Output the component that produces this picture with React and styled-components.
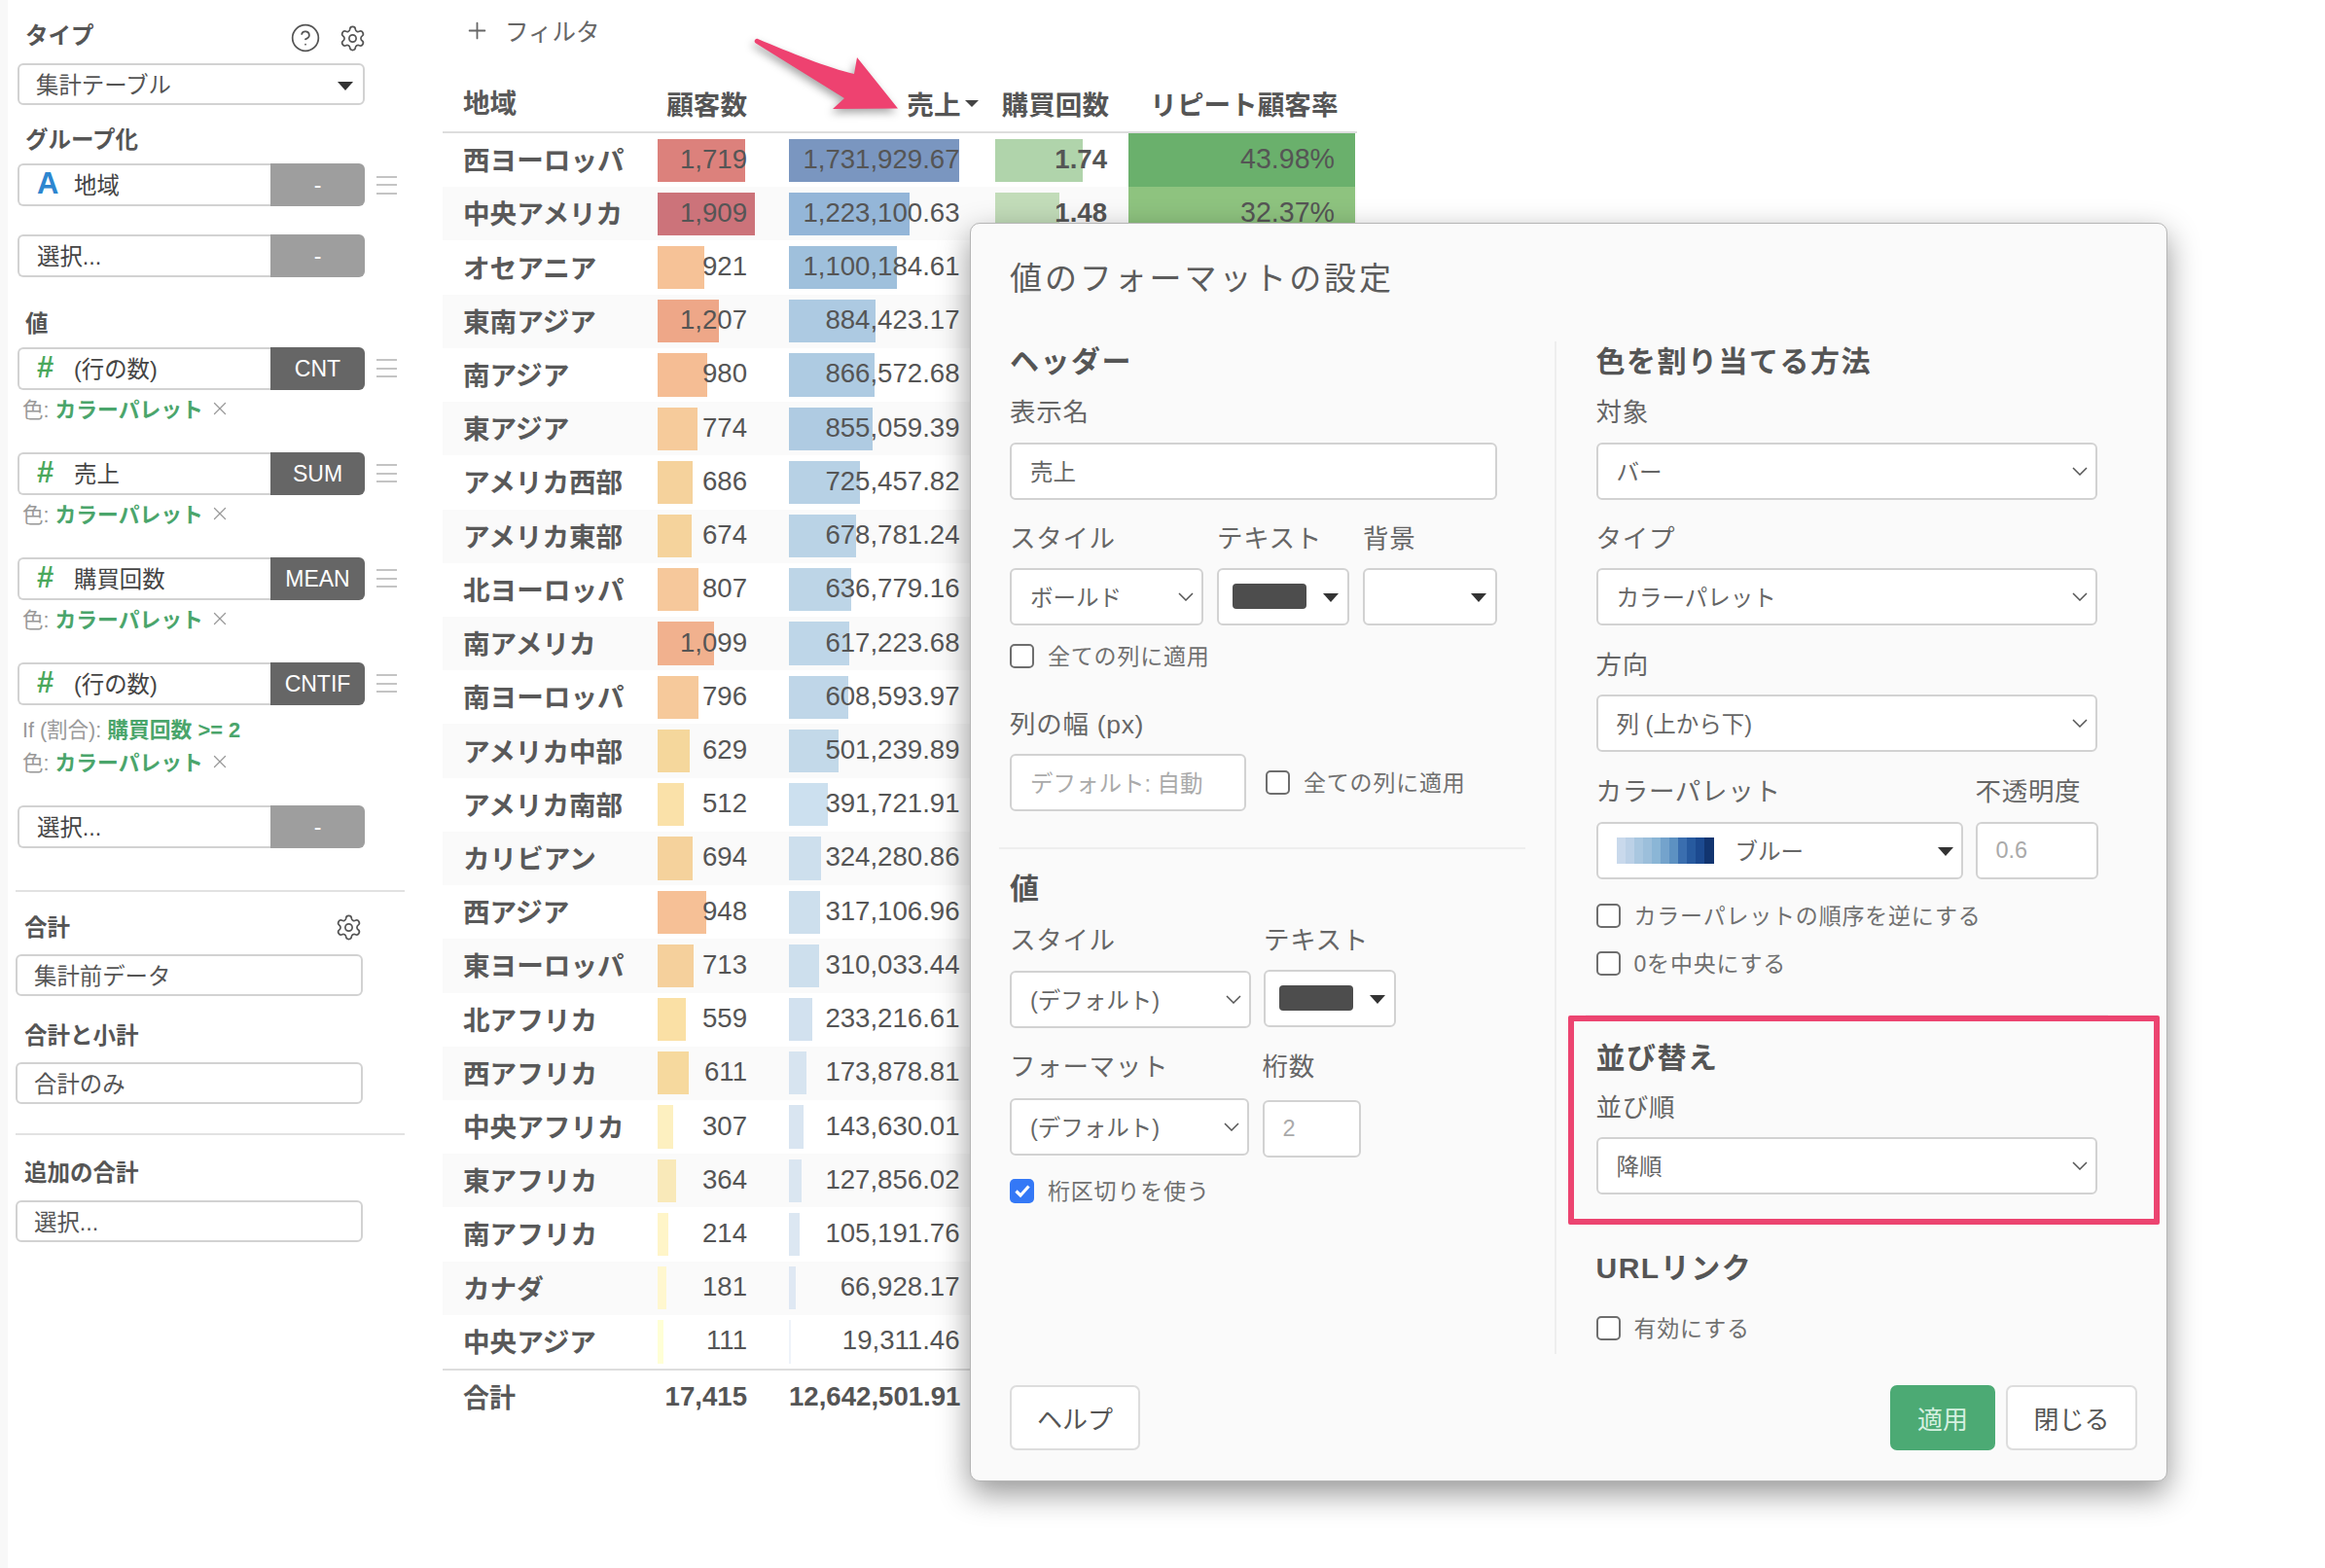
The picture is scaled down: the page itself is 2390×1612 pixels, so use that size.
import styled, { createGlobalStyle } from 'styled-components';
import { Settings, CircleHelp, Plus, X } from 'lucide-react';

const FONT = '"Liberation Sans", "Noto Sans CJK JP", sans-serif';

const GlobalStyle = createGlobalStyle`
  html, body {
    margin: 0;
    padding: 0;
    background: #fff;
  }
  body {
    width: 2390px;
    height: 1612px;
    overflow: hidden;
    color: #555;
    font-family: ${FONT};
  }
  * {
    box-sizing: border-box;
  }
`;

const rows = [
  { name: '西ヨーロッパ', count: 1719, sales: 1731929.67, buy: 1.74, repeat: '43.98%', buyColor: '#b0d4ab', repeatColor: '#6ab06c' },
  { name: '中央アメリカ', count: 1909, sales: 1223100.63, buy: 1.48, repeat: '32.37%', buyColor: '#c2dcb9', repeatColor: '#8ec37f' },
  { name: 'オセアニア', count: 921, sales: 1100184.61 },
  { name: '東南アジア', count: 1207, sales: 884423.17 },
  { name: '南アジア', count: 980, sales: 866572.68 },
  { name: '東アジア', count: 774, sales: 855059.39 },
  { name: 'アメリカ西部', count: 686, sales: 725457.82 },
  { name: 'アメリカ東部', count: 674, sales: 678781.24 },
  { name: '北ヨーロッパ', count: 807, sales: 636779.16 },
  { name: '南アメリカ', count: 1099, sales: 617223.68 },
  { name: '南ヨーロッパ', count: 796, sales: 608593.97 },
  { name: 'アメリカ中部', count: 629, sales: 501239.89 },
  { name: 'アメリカ南部', count: 512, sales: 391721.91 },
  { name: 'カリビアン', count: 694, sales: 324280.86 },
  { name: '西アジア', count: 948, sales: 317106.96 },
  { name: '東ヨーロッパ', count: 713, sales: 310033.44 },
  { name: '北アフリカ', count: 559, sales: 233216.61 },
  { name: '西アフリカ', count: 611, sales: 173878.81 },
  { name: '中央アフリカ', count: 307, sales: 143630.01 },
  { name: '東アフリカ', count: 364, sales: 127856.02 },
  { name: '南アフリカ', count: 214, sales: 105191.76 },
  { name: 'カナダ', count: 181, sales: 66928.17 },
  { name: '中央アジア', count: 111, sales: 19311.46 },
];

const countStops = [
  [111, '#ffffd6'], [181, '#fff7cf'], [214, '#fff5c8'], [307, '#fdf0c0'], [364, '#f9e9b9'],
  [512, '#fae1a9'], [559, '#fae0a5'], [629, '#f5d79c'], [713, '#f5d09c'], [796, '#f6c99b'],
  [948, '#f6c096'], [1207, '#eea788'], [1719, '#dc817c'], [1909, '#cc737a'],
];

const salesStops = [
  [19311, '#eef3f9'], [66928, '#dfe8f3'], [143630, '#d9e5f1'], [233216, '#d2e1ef'],
  [317106, '#cddfed'], [391721, '#cce0ef'], [501239, '#c3d9e9'], [608593, '#bfd6e8'],
  [866572, '#aecbe2'], [1100184, '#9fc0dc'], [1223100, '#94b6d8'], [1731929, '#7a96c0'],
];

function scaleColor(stops, value) {
  const hex = (c) => [1, 3, 5].map((i) => parseInt(c.slice(i, i + 2), 16));
  let i = 0;
  while (i < stops.length - 2 && value > stops[i + 1][0]) i += 1;
  const [v0, c0] = stops[i];
  const [v1, c1] = stops[i + 1];
  const t = Math.min(1, Math.max(0, (value - v0) / (v1 - v0)));
  const a = hex(c0);
  const b = hex(c1);
  return `rgb(${a.map((x, k) => Math.round(x + (b[k] - x) * t)).join(',')})`;
}

const money = (v) => v.toLocaleString('en-US', { minimumFractionDigits: 2, maximumFractionDigits: 2 });

export default function App() {
  return (
    <Page>
      <GlobalStyle />
      <Sidebar>
        <UpperGroup>
          <HeadRow>
            <PanelLabel>タイプ</PanelLabel>
            <HeadIcons>
              <CircleHelp size={32} strokeWidth={1.3} color="#555" />
              <Settings size={29} strokeWidth={1.4} color="#555" />
            </HeadIcons>
          </HeadRow>
          <SideSelect $mt={13}>
            集計テーブル
            <Caret />
          </SideSelect>

          <PanelLabel $mt={21}>グループ化</PanelLabel>
          <ColumnRow $mt={9} icon="A" iconColor="#2d86d0" label="地域" tag="-" muted drag />
          <ColumnRow $mt={29} label="選択..." tag="-" muted />

          <PanelLabel $mt={32.5}>値</PanelLabel>
          <ColumnRow $mt={9} icon="#" label="(行の数)" tag="CNT" drag />
          <ColorMeta />
          <ColumnRow $mt={33} icon="#" label="売上" tag="SUM" drag />
          <ColorMeta />
          <ColumnRow $mt={33} icon="#" label="購買回数" tag="MEAN" drag />
          <ColorMeta />
          <ColumnRow $mt={33} icon="#" label="(行の数)" tag="CNTIF" drag />
          <Meta $mt={12}>
            If (割合): <MetaValue>購買回数 &gt;= 2</MetaValue>
          </Meta>
          <ColorMeta $mt={10} />
          <ColumnRow $mt={33} label="選択..." tag="-" muted />
        </UpperGroup>

        <SideDivider $mt={43} />
        <LowerHead>
          <PanelLabel>合計</PanelLabel>
          <Settings size={29} strokeWidth={1.4} color="#555" />
        </LowerHead>
        <SideSelect $mt={14}>集計前データ</SideSelect>
        <PanelLabel $mt={26} $ml={1}>
          合計と小計
        </PanelLabel>
        <SideSelect $mt={12}>合計のみ</SideSelect>
        <SideDivider $mt={30} />
        <PanelLabel $mt={24} $ml={1}>
          追加の合計
        </PanelLabel>
        <SideSelect $mt={13}>選択...</SideSelect>
      </Sidebar>

      <Main>
        <FilterBar>
          <Plus size={27} strokeWidth={1.6} color="#666" />
          フィルタ
        </FilterBar>
        <Table>
          <HeadLine>
            <NameCell>地域</NameCell>
            <HeadCell $w={92}>顧客数</HeadCell>
            <HeadCell $w={175.5} $ml={44}>
              売上
              <SortCaret />
            </HeadCell>
            <HeadCell $w={115} $ml={37.5}>
              購買回数
            </HeadCell>
            <HeadCell $w={233} $ml={21} $pr={18.5}>
              リピート顧客率
            </HeadCell>
          </HeadLine>
          {rows.map((row) => (
            <Row key={row.name}>
              <NameCell>{row.name}</NameCell>
              <ValueCell $w={92}>
                <Bar style={{ width: (row.count / 1909) * 100, background: scaleColor(countStops, row.count) }} />
                <ValueText>{row.count.toLocaleString('en-US')}</ValueText>
              </ValueCell>
              <ValueCell $w={175.5} $ml={43}>
                <Bar style={{ width: (row.sales / 1731929.67) * 175, background: scaleColor(salesStops, row.sales) }} />
                <ValueText>{money(row.sales)}</ValueText>
              </ValueCell>
              {row.buy && (
                <ValueCell $w={115} $ml={36.5}>
                  <Bar style={{ width: ((row.buy - 0.76) / 0.98) * 90, background: row.buyColor }} />
                  <ValueText $bold>{row.buy.toFixed(2)}</ValueText>
                </ValueCell>
              )}
              {row.repeat && (
                <RepeatCell style={{ background: row.repeatColor }}>
                  <ValueText $large>{row.repeat}</ValueText>
                </RepeatCell>
              )}
            </Row>
          ))}
          <TotalLine>
            <TotalName>合計</TotalName>
            <ValueCell $w={92}>
              <ValueText $bold>17,415</ValueText>
            </ValueCell>
            <ValueCell $w={175.5} $ml={43}>
              <ValueText $bold>12,642,501.91</ValueText>
            </ValueCell>
          </TotalLine>
        </Table>
      </Main>

      <Arrow viewBox="0 0 170 90" width="170" height="90">
        <path
          d="M4.5 2.5 C3 4 3.5 5.5 5 6.5 L96 63 L84 74 L151 73.5 L109 21 L106 38 C80 32 40 16 7 2 C6 1.6 5 2 4.5 2.5 Z"
          fill="#ee4270"
        />
      </Arrow>

      <Modal>
        <ModalHeader>
          <ModalTitle>値のフォーマットの設定</ModalTitle>
        </ModalHeader>
        <ModalBody>
          <LeftPane>
            <SectionTitle>ヘッダー</SectionTitle>
            <FieldLabel $mt={17}>表示名</FieldLabel>
            <TextBox $mt={15}>売上</TextBox>
            <Inline $mt={24} $gap={14}>
              <Field $w={199}>
                <FieldLabel>スタイル</FieldLabel>
                <SelectBox $mt={14}>ボールド</SelectBox>
              </Field>
              <Field $w={136}>
                <FieldLabel>テキスト</FieldLabel>
                <ColorBox $mt={14} chip />
              </Field>
              <Field $w={138}>
                <FieldLabel>背景</FieldLabel>
                <ColorBox $mt={14} />
              </Field>
            </Inline>
            <CheckRow $mt={19}>全ての列に適用</CheckRow>
            <FieldLabel $mt={42}>列の幅 (px)</FieldLabel>
            <Inline $mt={14} $gap={20} $center>
              <TextBox $w={243} $placeholder>
                デフォルト: 自動
              </TextBox>
              <CheckRow>全ての列に適用</CheckRow>
            </Inline>
            <PaneDivider $mt={37} />
            <SectionTitle $mt={20}>値</SectionTitle>
            <Inline $mt={18} $gap={13}>
              <Field $w={248}>
                <FieldLabel>スタイル</FieldLabel>
                <SelectBox $mt={15}>(デフォルト)</SelectBox>
              </Field>
              <Field $w={136}>
                <FieldLabel>テキスト</FieldLabel>
                <ColorBox $mt={14} chip />
              </Field>
            </Inline>
            <Inline $mt={24} $gap={13.5}>
              <Field $w={246}>
                <FieldLabel>フォーマット</FieldLabel>
                <SelectBox $mt={16}>(デフォルト)</SelectBox>
              </Field>
              <Field $w={101}>
                <FieldLabel>桁数</FieldLabel>
                <TextBox $mt={18} $placeholder>
                  2
                </TextBox>
              </Field>
            </Inline>
            <CheckRow $mt={22} checked>
              桁区切りを使う
            </CheckRow>
          </LeftPane>

          <RightPane>
            <SectionTitle>色を割り当てる方法</SectionTitle>
            <FieldLabel $mt={17}>対象</FieldLabel>
            <SelectBox $mt={15}>バー</SelectBox>
            <FieldLabel $mt={24}>タイプ</FieldLabel>
            <SelectBox $mt={14}>カラーパレット</SelectBox>
            <FieldLabel $mt={25}>方向</FieldLabel>
            <SelectBox $mt={14}>列 (上から下)</SelectBox>
            <Inline $mt={25} $gap={13}>
              <Field $w={377}>
                <FieldLabel>カラーパレット</FieldLabel>
                <PaletteBox $mt={15}>
                  <Swatch>
                    {['#c9d9ec', '#bcd1e7', '#a9c7e0', '#9cbfdb', '#8bb6d6', '#74a3cc', '#5d91c2', '#3a6eaf', '#275a9f', '#1c4a90', '#123570'].map((c) => (
                      <SwatchStep key={c} $c={c} />
                    ))}
                  </Swatch>
                  ブルー
                  <Caret $right={8} />
                </PaletteBox>
              </Field>
              <Field $w={126}>
                <FieldLabel>不透明度</FieldLabel>
                <TextBox $mt={15} $placeholder>
                  0.6
                </TextBox>
              </Field>
            </Inline>
            <CheckRow $mt={25}>カラーパレットの順序を逆にする</CheckRow>
            <CheckRow $mt={24}>0を中央にする</CheckRow>
            <RightDivider $mt={40} />
            <SectionTitle $mt={22}>並び替え</SectionTitle>
            <FieldLabel $mt={16}>並び順</FieldLabel>
            <SelectBox $mt={14}>降順</SelectBox>
            <SectionTitle $mt={55}>URLリンク</SectionTitle>
            <CheckRow $mt={30}>有効にする</CheckRow>
          </RightPane>
        </ModalBody>
        <ModalFooter>
          <FooterButton $w={134}>ヘルプ</FooterButton>
          <FooterActions>
            <FooterButton $w={108} $primary>
              適用
            </FooterButton>
            <FooterButton $w={135}>閉じる</FooterButton>
          </FooterActions>
        </ModalFooter>
        <Highlight />
      </Modal>
    </Page>
  );
}

function ColumnRow({ $mt, icon, iconColor = '#4aa85c', label, tag, muted, drag }) {
  return (
    <ColumnWrap $mt={$mt}>
      <ColumnName>
        {icon && <TypeIcon $color={iconColor}>{icon}</TypeIcon>}
        {label}
      </ColumnName>
      <ColumnTag $muted={muted}>{tag}</ColumnTag>
      {drag && (
        <DragHandle>
          <i />
          <i />
          <i />
        </DragHandle>
      )}
    </ColumnWrap>
  );
}

function ColorMeta({ $mt = 7 }) {
  return (
    <Meta $mt={$mt}>
      色: <MetaValue>カラーパレット</MetaValue>
      <X size={22} strokeWidth={1.4} color="#999" />
    </Meta>
  );
}

function SelectBox({ $mt, children }) {
  return (
    <Box $mt={$mt}>
      {children}
      <Chevron viewBox="0 0 16 9" width="16" height="9">
        <path d="M1 1 L8 8 L15 1" fill="none" stroke="#555" strokeWidth="1.5" />
      </Chevron>
    </Box>
  );
}

function ColorBox({ $mt, chip }) {
  return (
    <Box $mt={$mt}>
      {chip && <ColorChip />}
      <Caret $right={9} />
    </Box>
  );
}

function CheckRow({ $mt, checked, children }) {
  return (
    <CheckLine $mt={$mt}>
      <CheckBox $checked={checked}>
        {checked && (
          <svg viewBox="0 0 20 20" width="20" height="20">
            <path d="M3.5 10.5 L8 15 L16.5 5.5" fill="none" stroke="#fff" strokeWidth="3.2" />
          </svg>
        )}
      </CheckBox>
      <CheckText>{children}</CheckText>
    </CheckLine>
  );
}

/* Page */
const Page = styled.div`
  position: relative;
  display: flex;
  width: 2390px;
  height: 1612px;
  background: #fff;
  border-left: 8px solid #f8f8f8;
`;

/* Sidebar */
const Sidebar = styled.aside`
  flex: 0 0 447px;
  padding: 22px 0 0 8px;
`;

const UpperGroup = styled.div`
  padding-left: 2px;
`;

const HeadRow = styled.div`
  display: flex;
  justify-content: space-between;
  align-items: center;
  width: 358px;
  height: 30px;
  padding-left: 8px;
`;

const HeadIcons = styled.div`
  display: flex;
  align-items: center;
  gap: 18px;
  margin-top: 4px;
  margin-right: -1px;
`;

const PanelLabel = styled.div`
  margin-top: ${({ $mt }) => $mt || 0}px;
  margin-left: ${({ $ml }) => $ml || 0}px;
  padding-left: ${({ $mt }) => ($mt ? 8 : 0)}px;
  color: #555;
  font-weight: 700;
  font-size: 23.5px;
  line-height: 30px;
`;

const SideSelect = styled.div`
  position: relative;
  display: flex;
  align-items: center;
  width: 357px;
  height: 43px;
  margin-top: ${({ $mt }) => $mt || 0}px;
  padding: 0 0 2px 17px;
  color: #555;
  font-size: 23.4px;
  background: #fff;
  border: 2px solid #d2d2d2;
  border-radius: 6px;
`;

const Caret = styled.span`
  position: absolute;
  top: 50%;
  right: ${({ $right }) => $right ?? 10}px;
  margin-top: -3px;
  border-top: 9px solid #333;
  border-right: 8px solid transparent;
  border-left: 8px solid transparent;
`;

const ColumnWrap = styled.div`
  display: flex;
  align-items: center;
  height: 44px;
  margin-top: ${({ $mt }) => $mt || 0}px;
`;

const ColumnName = styled.div`
  display: flex;
  align-items: center;
  width: 260px;
  height: 100%;
  padding: 0 0 2px 18px;
  color: #444;
  font-size: 23.4px;
  background: #fff;
  border: 2px solid #d2d2d2;
  border-right: none;
  border-radius: 6px 0 0 6px;
`;

const TypeIcon = styled.span`
  width: 38px;
  color: ${({ $color }) => $color};
  font-weight: 700;
  font-size: 31px;
`;

const ColumnTag = styled.div`
  display: flex;
  justify-content: center;
  align-items: center;
  width: 97px;
  height: 100%;
  padding-top: 1px;
  color: #fff;
  font-size: 23px;
  background: ${({ $muted }) => ($muted ? '#9e9e9e' : '#666')};
  border-radius: 0 6px 6px 0;
`;

const DragHandle = styled.div`
  display: flex;
  flex-direction: column;
  gap: 6.5px;
  width: 21px;
  margin-left: 12px;

  i {
    display: block;
    height: 2px;
    background: #c4c4c4;
  }
`;

const Meta = styled.div`
  display: flex;
  align-items: center;
  gap: 6px;
  height: 24px;
  margin-top: ${({ $mt }) => $mt || 0}px;
  padding-left: 5px;
  color: #999;
  font-size: 21.5px;
`;

const MetaValue = styled.span`
  color: #4aa56b;
  font-weight: 700;
  font-size: 21.8px;
`;

const SideDivider = styled.div`
  width: 400px;
  height: 2px;
  margin-top: ${({ $mt }) => $mt}px;
  background: #e2e2e2;
`;

const LowerHead = styled.div`
  display: flex;
  justify-content: space-between;
  align-items: center;
  width: 357px;
  height: 30px;
  margin-top: 20.5px;
  padding: 3px 0 0 9px;
`;

/* Table */
const Main = styled.main`
  flex: 0 0 940px;
`;

const FilterBar = styled.div`
  display: flex;
  align-items: center;
  gap: 15px;
  height: 64px;
  padding: 0 0 2px 22px;
  color: #666;
  font-size: 24.5px;
`;

const Table = styled.div`
  width: 940px;
`;

const HeadLine = styled.div`
  display: flex;
  align-items: center;
  height: 73px;
  padding-top: 12px;
  font-weight: 700;
  font-size: 27.6px;
  border-bottom: 2px solid #ddd;
`;

const NameCell = styled.div`
  display: flex;
  flex: 0 0 221px;
  align-items: center;
  padding: 0 0 3px 21px;
  color: #595959;
  font-weight: 700;
  font-size: 27.6px;
`;

const HeadCell = styled.div`
  position: relative;
  flex: 0 0 ${({ $w }) => $w}px;
  margin-left: ${({ $ml }) => $ml || 0}px;
  padding-right: ${({ $pr }) => $pr || 0}px;
  text-align: right;
  white-space: nowrap;
`;

const SortCaret = styled.span`
  position: absolute;
  top: 50%;
  left: 100%;
  margin-top: -3px;
  margin-left: 4px;
  border-top: 7px solid #444;
  border-right: 7px solid transparent;
  border-left: 7px solid transparent;
`;

const Row = styled.div`
  display: flex;
  align-items: stretch;
  height: 55.22px;

  &:nth-child(odd) {
    background: #fafafa;
  }
`;

const ValueCell = styled.div`
  position: relative;
  display: flex;
  flex: 0 0 ${({ $w }) => $w}px;
  justify-content: flex-end;
  align-items: center;
  margin-left: ${({ $ml }) => $ml || 0}px;
`;

const Bar = styled.span`
  position: absolute;
  top: 5.5px;
  bottom: 5.5px;
  left: 0;
`;

const ValueText = styled.span`
  position: relative;
  margin-bottom: 2px;
  color: #555;
  font-weight: ${({ $bold }) => ($bold ? 700 : 400)};
  font-size: ${({ $large }) => ($large ? 28.6 : 27.6)}px;
  white-space: nowrap;
`;

const RepeatCell = styled.div`
  display: flex;
  flex: 0 0 233px;
  justify-content: flex-end;
  align-items: center;
  margin-left: 22px;
  padding-right: 21px;
`;

const TotalLine = styled.div`
  display: flex;
  align-items: center;
  height: 60px;
  padding-bottom: 2px;
  border-top: 2px solid #ddd;
`;

const TotalName = styled(NameCell)`
  font-size: 27px;
`;

const Arrow = styled.svg`
  position: absolute;
  top: 38px;
  left: 764px;
  filter: drop-shadow(-2px 4px 4px rgba(0, 0, 0, 0.35));
`;

/* Modal */
const Modal = styled.section`
  position: absolute;
  top: 228.5px;
  left: 989px;
  display: flex;
  flex-direction: column;
  width: 1231px;
  height: 1294px;
  background: #fafafa;
  border: 1px solid #b5b5b5;
  border-radius: 10px;
  box-shadow: 0 12px 32px rgba(0, 0, 0, 0.42);
`;

const ModalHeader = styled.header`
  display: flex;
  align-items: flex-start;
  height: 121px;
  padding: 34px 0 0 40px;
`;

const ModalTitle = styled.h2`
  margin: 0;
  color: #5c5c5c;
  font-weight: 400;
  font-size: 33px;
  line-height: 46px;
  letter-spacing: 2.9px;
`;

const ModalBody = styled.div`
  display: flex;
  height: 1041px;
`;

const LeftPane = styled.div`
  flex: 0 0 600px;
  min-width: 0;
  padding: 0 59px 0 40px;
`;

const RightPane = styled.div`
  flex: 1;
  min-width: 0;
  padding: 0 71px 0 40.5px;
  border-left: 2px solid #eee;
`;

const SectionTitle = styled.h3`
  height: 40px;
  margin: ${({ $mt }) => $mt || 0}px 0 0;
  padding-top: 1px;
  color: #555;
  font-weight: 700;
  font-size: 30px;
  line-height: 40px;
  letter-spacing: 1.5px;
`;

const FieldLabel = styled.div`
  height: 32px;
  margin-top: ${({ $mt }) => $mt || 0}px;
  padding-top: 0.5px;
  color: #666;
  font-size: 26.5px;
  line-height: 32px;
  letter-spacing: 0.7px;
  white-space: nowrap;
`;

const Box = styled.div`
  position: relative;
  display: flex;
  align-items: center;
  height: 59px;
  margin-top: ${({ $mt }) => $mt || 0}px;
  padding-left: 19px;
  color: #666;
  font-size: 23.5px;
  background: #fff;
  border: 2px solid #d2d2d2;
  border-radius: 6px;
`;

const TextBox = styled(Box)`
  flex: ${({ $w }) => ($w ? `0 0 ${$w}px` : 'none')};
  color: ${({ $placeholder }) => ($placeholder ? '#aaa' : '#666')};
`;

const PaletteBox = styled(Box)`
  gap: 22px;
`;

const Swatch = styled.span`
  display: flex;
  width: 100px;
  height: 27px;
`;

const SwatchStep = styled.i`
  flex: 1;
  background: ${({ $c }) => $c};
`;

const Chevron = styled.svg`
  position: absolute;
  top: 50%;
  right: 8px;
  margin-top: -4px;
`;

const ColorChip = styled.span`
  width: 76px;
  height: 26px;
  margin-left: -5.5px;
  background: #4d4d4d;
  border-radius: 4px;
`;

const Inline = styled.div`
  display: flex;
  align-items: ${({ $center }) => ($center ? 'center' : 'flex-start')};
  gap: ${({ $gap }) => $gap}px;
  margin-top: ${({ $mt }) => $mt || 0}px;
`;

const Field = styled.div`
  flex: 0 0 ${({ $w }) => $w}px;
`;

const CheckLine = styled.label`
  display: flex;
  align-items: center;
  gap: 14px;
  height: 25px;
  margin-top: ${({ $mt }) => $mt || 0}px;
  color: #707070;
  font-size: 23px;
  letter-spacing: 0.8px;
  white-space: nowrap;
`;

const CheckText = styled.span`
  margin-bottom: 3px;
`;

const CheckBox = styled.span`
  display: flex;
  flex: 0 0 25px;
  justify-content: center;
  align-items: center;
  height: 25px;
  background: ${({ $checked }) => ($checked ? '#3478f6' : '#fff')};
  border: ${({ $checked }) => ($checked ? 'none' : '2px solid #6e6e6e')};
  border-radius: 5px;
`;

const PaneDivider = styled.div`
  width: 541px;
  height: 2px;
  margin-top: ${({ $mt }) => $mt}px;
  margin-left: -11px;
  background: #eee;
`;

const RightDivider = styled(PaneDivider)`
  width: 537px;
`;

const ModalFooter = styled.footer`
  display: flex;
  justify-content: space-between;
  align-items: flex-start;
  padding: 32px 30px 0 40px;
`;

const FooterActions = styled.div`
  display: flex;
  gap: 11px;
`;

const FooterButton = styled.button`
  width: ${({ $w }) => $w}px;
  height: 67px;
  color: ${({ $primary }) => ($primary ? '#d5f0e0' : '#555')};
  font-size: 26px;
  font-family: inherit;
  background: ${({ $primary }) => ($primary ? '#4caa74' : '#fff')};
  border: ${({ $primary }) => ($primary ? 'none' : '2px solid #ddd')};
  border-radius: 7px;
`;

const Highlight = styled.div`
  position: absolute;
  top: 814px;
  left: 614px;
  width: 608px;
  height: 215px;
  border: 6px solid #ec4470;
  border-radius: 2px;
  pointer-events: none;
`;
